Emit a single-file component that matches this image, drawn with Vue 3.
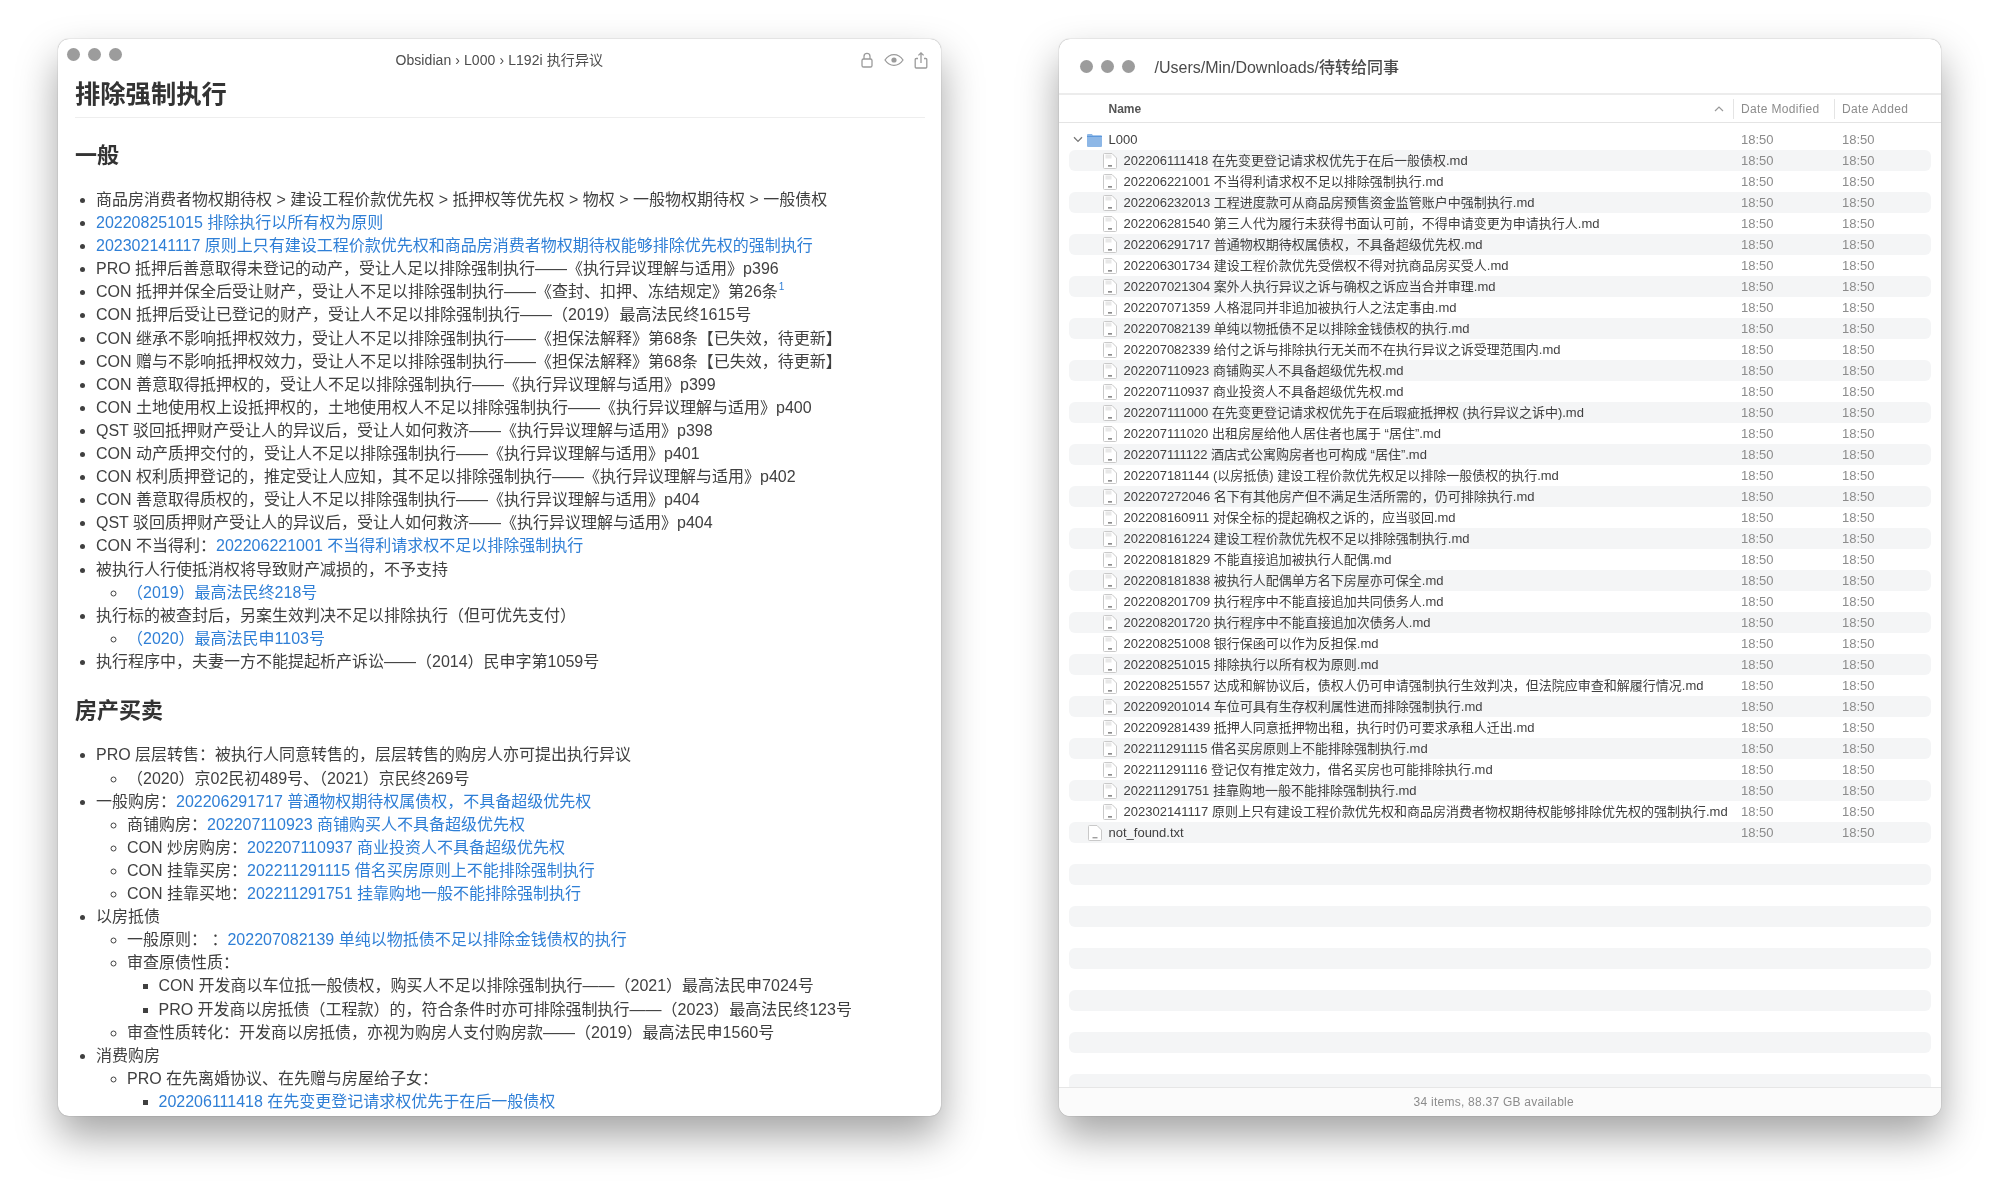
<script setup>
const sectionOne = [
  { l: 1, t: '商品房消费者物权期待权 > 建设工程价款优先权 > 抵押权等优先权 > 物权 > 一般物权期待权 > 一般债权' },
  { l: 1, a: '202208251015 排除执行以所有权为原则' },
  { l: 1, a: '202302141117 原则上只有建设工程价款优先权和商品房消费者物权期待权能够排除优先权的强制执行' },
  { l: 1, t: 'PRO 抵押后善意取得未登记的动产，受让人足以排除强制执行——《执行异议理解与适用》p396' },
  { l: 1, t: 'CON 抵押并保全后受让财产，受让人不足以排除强制执行——《查封、扣押、冻结规定》第26条', sup: '1' },
  { l: 1, t: 'CON 抵押后受让已登记的财产，受让人不足以排除强制执行——（2019）最高法民终1615号' },
  { l: 1, t: 'CON 继承不影响抵押权效力，受让人不足以排除强制执行——《担保法解释》第68条【已失效，待更新】' },
  { l: 1, t: 'CON 赠与不影响抵押权效力，受让人不足以排除强制执行——《担保法解释》第68条【已失效，待更新】' },
  { l: 1, t: 'CON 善意取得抵押权的，受让人不足以排除强制执行——《执行异议理解与适用》p399' },
  { l: 1, t: 'CON 土地使用权上设抵押权的，土地使用权人不足以排除强制执行——《执行异议理解与适用》p400' },
  { l: 1, t: 'QST 驳回抵押财产受让人的异议后，受让人如何救济——《执行异议理解与适用》p398' },
  { l: 1, t: 'CON 动产质押交付的，受让人不足以排除强制执行——《执行异议理解与适用》p401' },
  { l: 1, t: 'CON 权利质押登记的，推定受让人应知，其不足以排除强制执行——《执行异议理解与适用》p402' },
  { l: 1, t: 'CON 善意取得质权的，受让人不足以排除强制执行——《执行异议理解与适用》p404' },
  { l: 1, t: 'QST 驳回质押财产受让人的异议后，受让人如何救济——《执行异议理解与适用》p404' },
  { l: 1, t: 'CON 不当得利：', a: '202206221001 不当得利请求权不足以排除强制执行' },
  { l: 1, t: '被执行人行使抵消权将导致财产减损的，不予支持' },
  { l: 2, a: '（2019）最高法民终218号' },
  { l: 1, t: '执行标的被查封后，另案生效判决不足以排除执行（但可优先支付）' },
  { l: 2, a: '（2020）最高法民申1103号' },
  { l: 1, t: '执行程序中，夫妻一方不能提起析产诉讼——（2014）民申字第1059号' }
]

const sectionTwo = [
  { l: 1, t: 'PRO 层层转售：被执行人同意转售的，层层转售的购房人亦可提出执行异议' },
  { l: 2, t: '（2020）京02民初489号、（2021）京民终269号' },
  { l: 1, t: '一般购房：', a: '202206291717 普通物权期待权属债权，不具备超级优先权' },
  { l: 2, t: '商铺购房：', a: '202207110923 商铺购买人不具备超级优先权' },
  { l: 2, t: 'CON 炒房购房：', a: '202207110937 商业投资人不具备超级优先权' },
  { l: 2, t: 'CON 挂靠买房：', a: '202211291115 借名买房原则上不能排除强制执行' },
  { l: 2, t: 'CON 挂靠买地：', a: '202211291751 挂靠购地一般不能排除强制执行' },
  { l: 1, t: '以房抵债' },
  { l: 2, t: '一般原则： ：', a: '202207082139 单纯以物抵债不足以排除金钱债权的执行' },
  { l: 2, t: '审查原债性质：' },
  { l: 3, t: 'CON 开发商以车位抵一般债权，购买人不足以排除强制执行——（2021）最高法民申7024号' },
  { l: 3, t: 'PRO 开发商以房抵债（工程款）的，符合条件时亦可排除强制执行——（2023）最高法民终123号' },
  { l: 2, t: '审查性质转化：开发商以房抵债，亦视为购房人支付购房款——（2019）最高法民申1560号' },
  { l: 1, t: '消费购房' },
  { l: 2, t: 'PRO 在先离婚协议、在先赠与房屋给子女：' },
  { l: 3, a: '202206111418 在先变更登记请求权优先于在后一般债权' }
]

const mdFiles = [
  '202206111418 在先变更登记请求权优先于在后一般债权',
  '202206221001 不当得利请求权不足以排除强制执行',
  '202206232013 工程进度款可从商品房预售资金监管账户中强制执行',
  '202206281540 第三人代为履行未获得书面认可前，不得申请变更为申请执行人',
  '202206291717 普通物权期待权属债权，不具备超级优先权',
  '202206301734 建设工程价款优先受偿权不得对抗商品房买受人',
  '202207021304 案外人执行异议之诉与确权之诉应当合并审理',
  '202207071359 人格混同并非追加被执行人之法定事由',
  '202207082139 单纯以物抵债不足以排除金钱债权的执行',
  '202207082339 给付之诉与排除执行无关而不在执行异议之诉受理范围内',
  '202207110923 商铺购买人不具备超级优先权',
  '202207110937 商业投资人不具备超级优先权',
  '202207111000 在先变更登记请求权优先于在后瑕疵抵押权 (执行异议之诉中)',
  '202207111020 出租房屋给他人居住者也属于 “居住”',
  '202207111122 酒店式公寓购房者也可构成 “居住”',
  '202207181144 (以房抵债) 建设工程价款优先权足以排除一般债权的执行',
  '202207272046 名下有其他房产但不满足生活所需的，仍可排除执行',
  '202208160911 对保全标的提起确权之诉的，应当驳回',
  '202208161224 建设工程价款优先权不足以排除强制执行',
  '202208181829 不能直接追加被执行人配偶',
  '202208181838 被执行人配偶单方名下房屋亦可保全',
  '202208201709 执行程序中不能直接追加共同债务人',
  '202208201720 执行程序中不能直接追加次债务人',
  '202208251008 银行保函可以作为反担保',
  '202208251015 排除执行以所有权为原则',
  '202208251557 达成和解协议后，债权人仍可申请强制执行生效判决，但法院应审查和解履行情况',
  '202209201014 车位可具有生存权利属性进而排除强制执行',
  '202209281439 抵押人同意抵押物出租，执行时仍可要求承租人迁出',
  '202211291115 借名买房原则上不能排除强制执行',
  '202211291116 登记仅有推定效力，借名买房也可能排除执行',
  '202211291751 挂靠购地一般不能排除强制执行',
  '202302141117 原则上只有建设工程价款优先权和商品房消费者物权期待权能够排除优先权的强制执行'
].map((n) => n + '.md')

const emptyRows = Array.from({ length: 12 }, (_, i) => i)
</script>

<template>
  <div class="desk" lang="zh-CN">
    <section class="win note">
      <header class="note-bar">
        <div class="lights tight">
          <i></i><i></i><i></i>
        </div>
        <div class="crumb">Obsidian › L000 › L192i 执行异议</div>
        <div class="tools">
          <svg width="14" height="16" viewBox="0 0 14 16" fill="none" stroke="#9b9b9b" stroke-width="1.3">
            <rect x="2" y="7" width="10" height="8" rx="1.6" />
            <path d="M4 7V4.4a3 3 0 0 1 6 0V7" />
          </svg>
          <svg width="20" height="14" viewBox="0 0 20 14" fill="none" stroke="#9b9b9b" stroke-width="1.3">
            <path d="M1 7c2.4-3.6 5.4-5.4 9-5.4s6.600 1.800 9 5.400c-2.400 3.600-5.400 5.400-9 5.400S3.400 10.600 1 7Z" />
            <circle cx="10" cy="7" r="2.600" fill="#9b9b9b" stroke="none" />
          </svg>
          <svg width="14" height="17" viewBox="0 0 14 17" fill="none" stroke="#9b9b9b" stroke-width="1.3">
            <path d="M4 6.500H2.200a1 1 0 0 0-1 1V15a1 1 0 0 0 1 1h9.600a1 1 0 0 0 1-1V7.500a1 1 0 0 0-1-1H10" />
            <path d="M7 11V1M4.400 3.400 7 .9l2.600 2.500" />
          </svg>
        </div>
      </header>
      <article class="doc">
        <h1>排除强制执行</h1>
        <h2>一般</h2>
        <ul class="items">
          <li v-for="(it, i) in sectionOne" :key="i" :class="'lv' + it.l">
            <template v-if="it.t">{{ it.t }}</template><a v-if="it.a">{{ it.a }}</a><sup v-if="it.sup">{{ it.sup }}</sup>
          </li>
        </ul>
        <h2 class="second">房产买卖</h2>
        <ul class="items">
          <li v-for="(it, i) in sectionTwo" :key="i" :class="'lv' + it.l">
            <template v-if="it.t">{{ it.t }}</template><a v-if="it.a">{{ it.a }}</a>
          </li>
        </ul>
      </article>
    </section>

    <section class="win finder">
      <header class="finder-bar">
        <div class="lights">
          <i></i><i></i><i></i>
        </div>
        <div class="path">/Users/Min/Downloads/待转给同事</div>
      </header>
      <div class="cols">
        <div class="col-name">
          <span>Name</span>
          <svg width="10" height="6" viewBox="0 0 10 6" fill="none" stroke="#9a9a9a" stroke-width="1.200">
            <path d="M1 5 5 1l4 4" />
          </svg>
        </div>
        <div class="col-date">Date Modified</div>
        <div class="col-date">Date Added</div>
      </div>
      <div class="rows">
        <div class="row">
          <div class="cell-name folder">
            <svg class="chev" width="10" height="7" viewBox="0 0 10 7" fill="none" stroke="#777" stroke-width="1.300">
              <path d="M1 1.200 5 5.400l4-4.200" />
            </svg>
            <svg width="15" height="14" viewBox="0 0 15 14">
              <path d="M0 2a1 1 0 0 1 1-1h3.800l1.200 1.300h8a1 1 0 0 1 1 1V13a1 1 0 0 1-1 1H1a1 1 0 0 1-1-1Z" fill="#8db7e6" />
              <path d="M0 3.500h15" stroke="#5c98dc" stroke-width="1.200" />
            </svg>
            <span>L000</span>
          </div>
          <div class="cell-date">18:50</div>
          <div class="cell-date">18:50</div>
        </div>
        <div v-for="name in mdFiles" :key="name" class="row">
          <div class="cell-name md">
            <svg class="doc-ico" width="14" height="16" viewBox="0 0 14 16">
              <path d="M1.500.500h7.500l4.500 4.500v9.500a1 1 0 0 1-1 1h-11a1 1 0 0 1-1-1V1.500a1 1 0 0 1 1-1Z" fill="#fff" stroke="#c9c9c9" />
              <path d="M2.500 1.500h6v4h-6Z" fill="#e8e8e8" />
              <path d="M5 12.800h4" stroke="#666" stroke-width="1.200" />
            </svg>
            <span>{{ name }}</span>
          </div>
          <div class="cell-date">18:50</div>
          <div class="cell-date">18:50</div>
        </div>
        <div class="row">
          <div class="cell-name txt">
            <svg class="doc-ico" width="14" height="16" viewBox="0 0 14 16">
              <path d="M1.500.500h7.500l4.500 4.500v9.500a1 1 0 0 1-1 1h-11a1 1 0 0 1-1-1V1.500a1 1 0 0 1 1-1Z" fill="#fff" stroke="#c9c9c9" />
              <path d="M4.500 12.800h5" stroke="#777" stroke-width="1" />
            </svg>
            <span>not_found.txt</span>
          </div>
          <div class="cell-date">18:50</div>
          <div class="cell-date">18:50</div>
        </div>
        <div v-for="n in emptyRows" :key="n" class="row"></div>
      </div>
      <footer class="status">34 items, 88.37 GB available</footer>
    </section>
  </div>
</template>

<style scoped>
.desk {
  width: 2000px;
  height: 1194px;
  box-sizing: border-box;
  padding: 39px 59px 78px 58px;
  display: flex;
  gap: 118px;
  background: #fff;
  overflow: hidden;
  font-family: "Liberation Sans", "Noto Sans CJK SC", sans-serif;
  filter: blur(0.4px);
}
.win {
  flex: 1 1 0;
  min-width: 0;
  display: flex;
  flex-direction: column;
  background: #fff;
  border-radius: 11px;
  overflow: hidden;
  box-shadow: 0 20px 40px rgba(0, 0, 0, 0.36), 0 0 1px rgba(0, 0, 0, 0.5);
}
.lights {
  display: flex;
  gap: 8px;
}
.lights i {
  width: 13px;
  height: 13px;
  border-radius: 50%;
  background: #9c9c9c;
}
.lights.tight {
  margin-top: 9px;
  padding-left: 9px;
}

/* Note window */
.note-bar {
  height: 37px;
  flex: none;
  display: grid;
  grid-template-columns: 1fr auto 1fr;
  align-items: start;
}
.crumb {
  margin-top: 11px;
  font-size: 14px;
  letter-spacing: 0.08px;
  line-height: 20px;
  color: #4c4c4c;
}
.tools {
  display: flex;
  justify-content: flex-end;
  align-items: center;
  gap: 10px;
  height: 20px;
  margin-top: 11px;
  padding-right: 13px;
}
.doc {
  flex: 1;
  min-height: 0;
  overflow: hidden;
  padding: 0 16px 0 17px;
  color: #404040;
}
h1 {
  margin: 0;
  font-size: 25.300px;
  line-height: 36px;
  font-weight: 700;
  color: #333;
  padding-bottom: 5px;
  border-bottom: 1px solid #eee;
}
h2 {
  margin: 23px 0 0;
  font-size: 22px;
  line-height: 30px;
  font-weight: 700;
  color: #333;
}
h2.second {
  margin-top: 23.500px;
}
.items {
  list-style: none;
  margin: 17px 0 0;
  padding: 0;
  font-size: 16px;
  line-height: 23.100px;
}
.items li {
  display: list-item;
  white-space: nowrap;
}
.items a {
  color: #2f7fd6;
}
.items sup {
  color: #2f7fd6;
  font-size: 10px;
  line-height: 0;
  vertical-align: 7px;
  margin-left: 1px;
}
.lv1 {
  margin-left: 21px;
  list-style-type: disc;
}
.lv2 {
  margin-left: 52px;
  list-style-type: circle;
}
.lv3 {
  margin-left: 83.500px;
  list-style-type: square;
}

/* Finder window */
.finder-bar {
  height: 56px;
  flex: none;
  box-sizing: border-box;
  display: flex;
  align-items: center;
  padding-left: 21px;
  border-bottom: 2px solid #ececec;
}
.path {
  margin-left: 20px;
  font-size: 16px;
  font-weight: 500;
  color: #4a4a4a;
}
.cols {
  height: 28px;
  flex: none;
  box-sizing: border-box;
  display: grid;
  grid-template-columns: 1fr 101px 107px;
  align-items: center;
  border-bottom: 1px solid #e4e4e4;
  font-size: 12px;
}
.col-name {
  display: flex;
  align-items: center;
  justify-content: space-between;
  padding: 0 9px 0 50px;
  font-weight: 700;
  color: #555;
}
.col-date {
  height: 20px;
  line-height: 20px;
  padding-left: 7px;
  border-left: 1px solid #e4e4e4;
  color: #8c8c8c;
  letter-spacing: 0.35px;
}
.rows {
  flex: 1;
  min-height: 0;
  overflow: hidden;
  padding: 6px 10px 0;
}
.row {
  height: 21px;
  display: grid;
  grid-template-columns: 1fr 101px 97px;
  align-items: center;
  border-radius: 6px;
  font-size: 13px;
  line-height: 21px;
  color: #404040;
}
.row:nth-child(even) {
  background: #f4f5f6;
}
.cell-name {
  display: flex;
  align-items: center;
  white-space: nowrap;
}
.folder {
  padding-left: 4px;
  gap: 4px;
}
.folder span {
  margin-left: 3px;
}
.md {
  padding-left: 34px;
  gap: 7px;
}
.txt {
  padding-left: 19px;
  gap: 7px;
}
.doc-ico {
  flex: none;
}
.cell-date {
  padding-left: 8px;
  color: #8c8c8c;
}
.status {
  height: 29px;
  flex: none;
  box-sizing: border-box;
  border-top: 1px solid #e6e6e6;
  background: #fbfbfb;
  padding-right: 12px;
  text-align: center;
  font-size: 12px;
  letter-spacing: 0.25px;
  line-height: 29px;
  color: #8c8c8c;
}
</style>
